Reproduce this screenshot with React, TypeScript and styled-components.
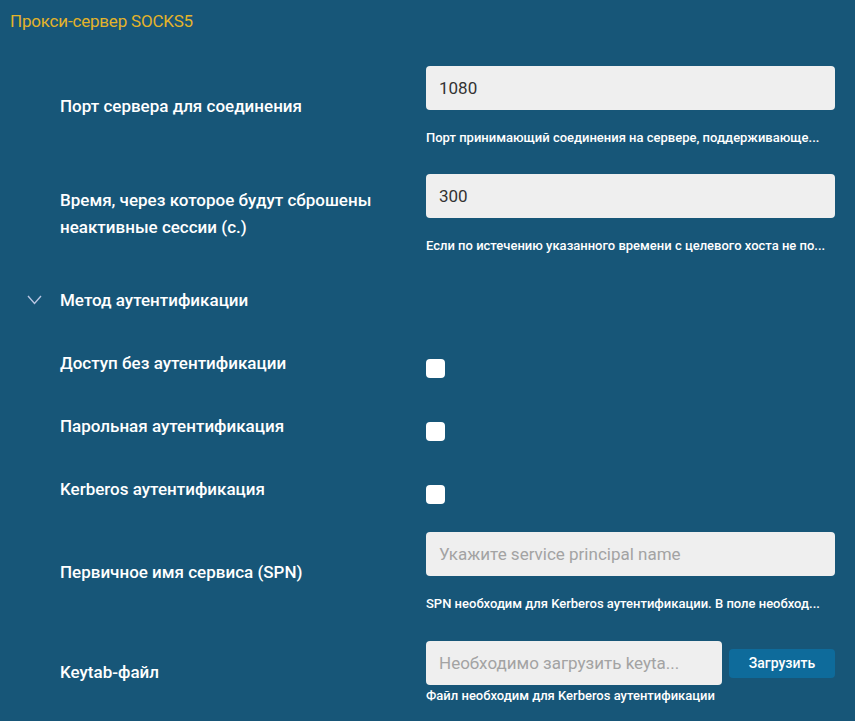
import styled, { createGlobalStyle } from "styled-components";

const GlobalStyle = createGlobalStyle`
  html, body {
    margin: 0;
    padding: 0;
    background: #175678;
  }
  body {
    font-family: Roboto, "Noto Sans", sans-serif;
    color: #ffffff;
  }
`;

const Page = styled.div`
  width: 855px;
  min-height: 721px;
  box-sizing: border-box;
  padding: 10px 20px 0 0;
  display: flex;
  flex-direction: column;
`;

const Title = styled.h2`
  margin: 0 0 0 10px;
  font-size: 17px;
  line-height: 22px;
  font-weight: 400;
  letter-spacing: -0.2px;
  color: #e3b32a;
`;

const Form = styled.div`
  display: flex;
  flex-direction: column;
  margin-top: 34px;
`;

const Row = styled.div<{ $top?: number; $check?: boolean }>`
  display: grid;
  grid-template-columns: 366px 409px;
  padding-left: 60px;
  margin-top: ${(p) => p.$top ?? 0}px;
  align-items: ${(p) => (p.$check ? "start" : "center")};
`;

const Label = styled.div`
  font-size: 17px;
  line-height: 27px;
  font-weight: 500;
  letter-spacing: 0;
  padding-right: 30px;
`;

const Field = styled.div`
  display: flex;
  flex-direction: column;
  min-width: 0;
`;

const Input = styled.input`
  box-sizing: border-box;
  width: 100%;
  height: 44px;
  border: none;
  border-radius: 4px;
  background: #efefef;
  padding: 0 13px;
  font-family: Roboto, "Noto Sans", sans-serif;
  font-size: 17px;
  color: #333;
  outline: none;
  &::placeholder {
    color: #a3a3a3;
  }
`;

const Hint = styled.div<{ $tight?: boolean }>`
  margin-top: ${(p) => (p.$tight ? 3 : 20)}px;
  font-size: 13px;
  line-height: 16px;
  font-weight: 500;
  white-space: nowrap;
`;

const Section = styled.div`
  display: flex;
  align-items: center;
  height: 30px;
  margin-top: 31px;
  padding-left: 27px;
  gap: 18px;
  font-size: 17px;
  font-weight: 500;
`;

const Check = styled.input`
  appearance: none;
  width: 19px;
  height: 19px;
  margin: 9px 0 0;
  border-radius: 4px;
  background: #ffffff;
  border: none;
`;

const FileRow = styled.div`
  display: flex;
  align-items: center;
  gap: 7px;
`;

const Upload = styled.button`
  flex: 0 0 106px;
  height: 29px;
  border: none;
  border-radius: 4px;
  background: #0e6b9b;
  color: #fff;
  font-family: Roboto, "Noto Sans", sans-serif;
  font-size: 14px;
  font-weight: 500;
`;

function Chevron() {
  return (
    <svg width="15" height="10" viewBox="0 0 15 10">
      <path d="M1 1 L7.5 8.5 L14 1" fill="none" stroke="#b9c5e2" strokeWidth="1.4" />
    </svg>
  );
}

export default function App() {
  return (
    <>
      <GlobalStyle />
      <Page>
        <Title>Прокси-сервер SOCKS5</Title>
        <Form>
          <Row>
            <Label>Порт сервера для соединения</Label>
            <Field>
              <Input defaultValue="1080" />
              <Hint>Порт принимающий соединения на сервере, поддерживающе...</Hint>
            </Field>
          </Row>
          <Row $top={28}>
            <Label>Время, через которое будут сброшены неактивные сессии (с.)</Label>
            <Field>
              <Input defaultValue="300" />
              <Hint>Если по истечению указанного времени с целевого хоста не по...</Hint>
            </Field>
          </Row>
          <Section>
            <Chevron />
            <span>Метод аутентификации</span>
          </Section>
          <Row $top={35} $check>
            <Label>Доступ без аутентификации</Label>
            <Field>
              <Check type="checkbox" />
            </Field>
          </Row>
          <Row $top={35} $check>
            <Label>Парольная аутентификация</Label>
            <Field>
              <Check type="checkbox" />
            </Field>
          </Row>
          <Row $top={35} $check>
            <Label>Kerberos аутентификация</Label>
            <Field>
              <Check type="checkbox" />
            </Field>
          </Row>
          <Row $top={28}>
            <Label>Первичное имя сервиса (SPN)</Label>
            <Field>
              <Input placeholder="Укажите service principal name" />
              <Hint>SPN необходим для Kerberos аутентификации. В поле необход...</Hint>
            </Field>
          </Row>
          <Row $top={29}>
            <Label>Keytab-файл</Label>
            <Field>
              <FileRow>
                <Input placeholder="Необходимо загрузить keyta..." readOnly />
                <Upload>Загрузить</Upload>
              </FileRow>
              <Hint $tight>Файл необходим для Kerberos аутентификации</Hint>
            </Field>
          </Row>
        </Form>
      </Page>
    </>
  );
}
